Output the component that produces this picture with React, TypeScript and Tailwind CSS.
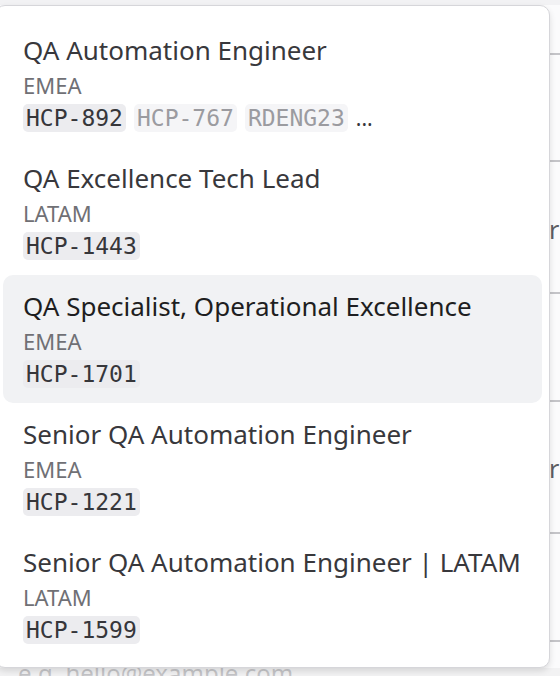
import React from "react"

interface Job {
  title: string
  region: string
  codes: string[]
  more?: boolean
}

const jobs: Job[] = [
  { title: "QA Automation Engineer", region: "EMEA", codes: ["HCP-892", "HCP-767", "RDENG23"], more: true },
  { title: "QA Excellence Tech Lead", region: "LATAM", codes: ["HCP-1443"] },
  { title: "QA Specialist, Operational Excellence", region: "EMEA", codes: ["HCP-1701"] },
  { title: "Senior QA Automation Engineer", region: "EMEA", codes: ["HCP-1221"] },
  { title: "Senior QA Automation Engineer | LATAM", region: "LATAM", codes: ["HCP-1599"] },
]

const sans = { fontFamily: '"Noto Sans", "Open Sans", sans-serif' }

const JobOption = ({ job, active }: { job: Job; active: boolean }) => {
  return (
    <div
      className={`flex flex-col rounded-[10px] px-5 pt-[14px] pb-[15px] ${active ? "bg-[#f1f2f4]" : ""}`}
    >
      <div className={`h-[34px] text-[26px] leading-[34px] ${active ? "text-[#1e1e21]" : "text-[#38383c]"}`}>
        {job.title}
      </div>
      <div className="h-[36px] text-[22px] leading-[36px] text-[#707075]">{job.region}</div>
      <div className="mt-px flex h-[28px] items-center gap-2">
        {job.codes.map((code, i) => (
          <span
            key={code}
            className={`flex h-[28px] items-center rounded-[5px] px-[3px] font-['DejaVu_Sans_Mono',monospace] text-[23px] ${
              i === 0 ? "bg-[#ececef] text-[#36363a]" : "bg-[#f5f5f7] text-[#9b9ba0]"
            }`}
          >
            {code}
          </span>
        ))}
        {job.more && <span className="text-[21px] leading-none text-[#36363a]">...</span>}
      </div>
    </div>
  )
}

export default function App() {
  // dashes and label tails of the form that sits under the menu
  const rightMarks = [
    { kind: "dash", top: 53 },
    { kind: "dash", top: 160 },
    { kind: "r", top: 217 },
    { kind: "dash", top: 292 },
    { kind: "dash", top: 400 },
    { kind: "r", top: 456 },
    { kind: "dash", top: 532 },
    { kind: "dash", top: 640 },
  ]

  return (
    <div className="relative h-[676px] w-[560px] overflow-hidden bg-[#fbfbfc]" style={sans}>
      <div className="h-[5px] bg-[#f2f2f4]" />
      <div className="relative h-[671px]">
        {rightMarks.map((m, i) =>
          m.kind === "dash" ? (
            <div
              key={i}
              className="absolute left-[550px] h-[2px] w-[10px] bg-[#c4c4c8]"
              style={{ top: m.top - 5 }}
            />
          ) : (
            <div
              key={i}
              className="absolute left-[549px] text-[25px] leading-[25px] text-[#5e5e63]"
              style={{ top: m.top - 5 }}
            >
              r
            </div>
          )
        )}
        <div className="absolute left-[18px] top-[653px] text-[24px] leading-[30px] text-[#66666b]">
          e.g. hello@example.com
        </div>
        <div className="absolute bottom-0 left-0 right-0 h-[8px] bg-[#eeeef0]/70" />
      </div>

      <div className="absolute left-[-5px] top-[5px] flex w-[555px] flex-col rounded-[10px] border border-[#d6d6da] bg-white px-[7px] pb-[8px] pt-[13px] shadow-[0_3px_6px_rgba(0,0,0,0.12)]">
        {jobs.map((job, i) => (
          <JobOption key={job.title} job={job} active={i === 2} />
        ))}
      </div>
    </div>
  )
}
